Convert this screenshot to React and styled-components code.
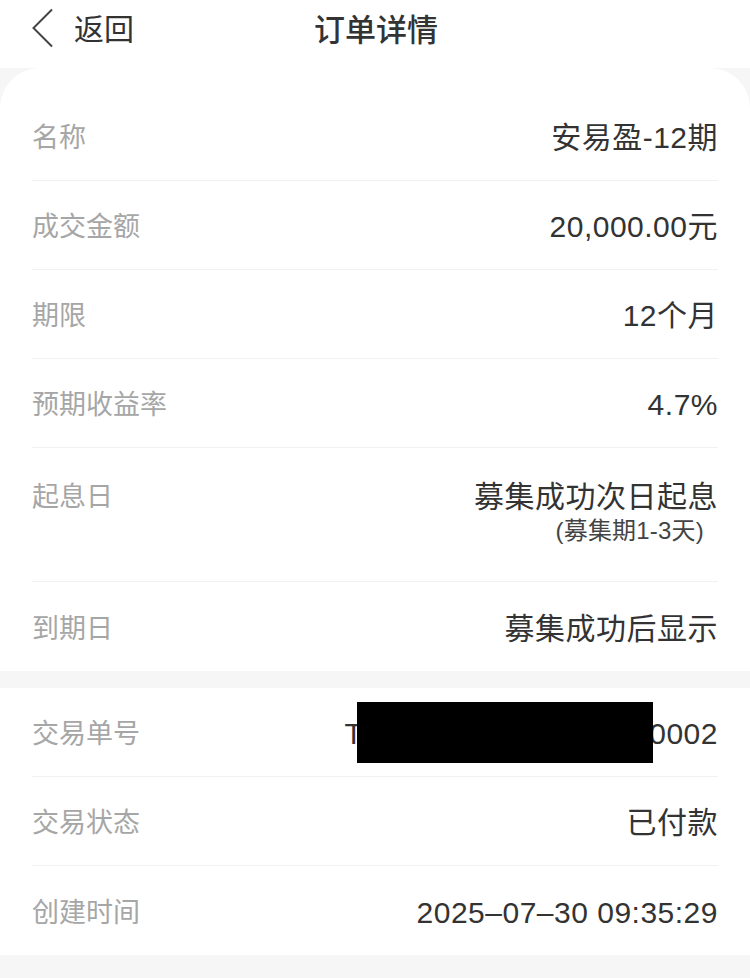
import React from 'react';
import styled, { createGlobalStyle } from 'styled-components';

const GlobalStyle = createGlobalStyle`
  html, body {
    margin: 0;
    padding: 0;
    background: #f6f6f6;
  }
  body {
    font-family: "Liberation Sans", "Noto Sans CJK SC", sans-serif;
    -webkit-font-smoothing: antialiased;
  }
`;

const Page = styled.div`
  width: 750px;
  min-height: 978px;
  background: #f6f6f6;
`;

const Header = styled.header`
  display: grid;
  grid-template-columns: 1fr auto 1fr;
  align-items: center;
  height: 54px;
  padding-bottom: 14px;
  background: #fff;
`;

const Back = styled.div`
  display: flex;
  align-items: center;
  gap: 20px;
  padding-left: 32px;
  font-size: 30px;
  color: #333;
`;

const Title = styled.h1`
  margin: 0 0 0 2px;
  font-size: 31px;
  font-weight: 500;
  color: #333;
`;

const Card = styled.section`
  background: #fff;
  padding-top: ${p => p.top || 0}px;
  border-radius: ${p => (p.rounded ? '40px 40px 0 0' : '0')};
  margin-bottom: 17px;
`;

const Row = styled.div`
  box-sizing: border-box;
  display: flex;
  justify-content: space-between;
  align-items: ${p => (p.tall ? 'flex-start' : 'center')};
  height: ${p => (p.tall ? 134 : 89)}px;
  padding-top: ${p => (p.tall ? 30 : 4)}px;
  margin: 0 32px;
  border-bottom: 1px solid #f1f1f1;

  &:last-child {
    border-bottom: none;
  }
`;

const Label = styled.div`
  font-size: 27px;
  line-height: 38px;
  color: #a6a6a6;
`;

const Value = styled.div`
  display: flex;
  flex-direction: column;
  align-items: flex-end;
  font-size: 30px;
  line-height: 38px;
  color: #333;
  letter-spacing: 0.5px;
`;

const SubValue = styled.div`
  font-size: 24px;
  line-height: 30px;
  color: #444;
  letter-spacing: 0.2px;
  padding-right: 14px;
`;

const OrderNo = styled.div`
  display: flex;
  align-items: center;
  font-size: 30px;
  color: #333;
  letter-spacing: 0.5px;
`;

const Redact = styled.span`
  position: relative;
  z-index: 1;
  display: inline-block;
  width: 296px;
  height: 61px;
  margin: -3px -4px 0 -6px;
  background: #000;
`;

const Chevron = () => (
  <svg width="22" height="41" viewBox="0 0 22 41" style={{ marginTop: 2 }}>
    <polyline points="20,1.5 1.5,20 20,38.5" fill="none" stroke="#444" strokeWidth="2" strokeLinejoin="miter" />
  </svg>
);

const productRows = [
  ['名称', '安易盈-12期'],
  ['成交金额', '20,000.00元'],
  ['期限', '12个月'],
  ['预期收益率', '4.7%'],
];

export default function App() {
  return (
    <>
      <GlobalStyle />
      <Page>
        <Header>
          <Back>
            <Chevron />
            返回
          </Back>
          <Title>订单详情</Title>
          <div />
        </Header>

        <Card rounded top={24}>
          {productRows.map(([k, v]) => (
            <Row key={k}>
              <Label>{k}</Label>
              <Value>{v}</Value>
            </Row>
          ))}
          <Row tall>
            <Label>起息日</Label>
            <Value>
              募集成功次日起息
              <SubValue>(募集期1-3天)</SubValue>
            </Value>
          </Row>
          <Row>
            <Label>到期日</Label>
            <Value>募集成功后显示</Value>
          </Row>
        </Card>

        <Card>
          <Row>
            <Label>交易单号</Label>
            <OrderNo>
              T<Redact />0002
            </OrderNo>
          </Row>
          <Row>
            <Label>交易状态</Label>
            <Value>已付款</Value>
          </Row>
          <Row>
            <Label>创建时间</Label>
            <Value>2025–07–30 09:35:29</Value>
          </Row>
        </Card>
      </Page>
    </>
  );
}
